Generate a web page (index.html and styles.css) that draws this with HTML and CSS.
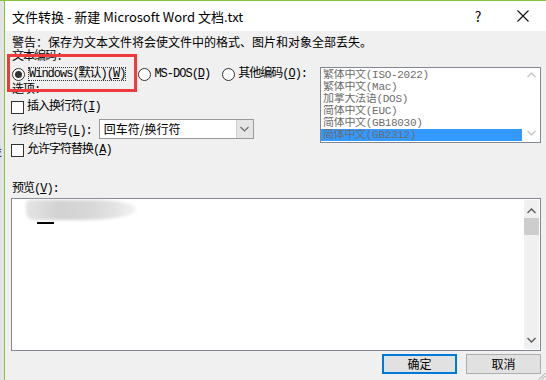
FILE: index.html
```html
<!DOCTYPE html>
<html lang="zh-CN">
<head>
  <meta charset="UTF-8">
  <title>文件转换</title>
  <link rel="stylesheet" href="styles.css">
</head>
<body>
  <div class="screen">
    <div class="desk"><span>设</span></div>

    <div class="window">
      <!-- Title bar -->
      <div class="titlebar">
        <span class="title">文件转换 - 新建 Microsoft Word 文档.txt</span>
        <span class="tb-btn help">?</span>
        <span class="tb-btn close">
          <svg width="12" height="12" viewBox="0 0 12 12"><path d="M0.5 0.5 L11.5 11.5 M11.5 0.5 L0.5 11.5" stroke="#111" stroke-width="1.1" fill="none"/></svg>
        </span>
      </div>

      <div class="content">
        <p class="warning">警告：保存为文本文件将会使文件中的格式、图片和对象全部丢失。</p>

        <div class="options">
          <div class="left">
            <div class="label mono">文本编码:</div>
            <div class="radios mono">
              <span class="radio checked"><span class="circle"></span><span class="focus">Windows(默认)(<u>W</u>)</span></span>
              <span class="radio"><span class="circle"></span><span>MS-DOS(<u>D</u>)</span></span>
              <span class="radio"><span class="circle"></span><span>其他编码(<u>O</u>):</span></span>
            </div>
            <div class="label opts mono">选项:</div>
            <div class="check mono first"><span class="box"></span>插入换行符(<u>I</u>)</div>
            <div class="eol">
              <span class="mono">行终止符号(<u>L</u>):</span>
              <div class="select">
                <span class="select-value">回车符/换行符</span>
                <span class="select-arrow">
                  <svg width="9" height="6" viewBox="0 0 9 6"><path d="M0.5 1 L4.5 5 L8.5 1" stroke="#6a6a6a" stroke-width="1.2" fill="none"/></svg>
                </span>
              </div>
            </div>
            <div class="check mono second"><span class="box"></span>允许字符替换(<u>A</u>)</div>
          </div>

          <div class="listbox mono">
            <div class="items">
              <div class="item">繁体中文(ISO-2022)</div>
              <div class="item">繁体中文(Mac)</div>
              <div class="item">加拿大法语(DOS)</div>
              <div class="item">简体中文(EUC)</div>
              <div class="item">简体中文(GB18030)</div>
              <div class="item selected">简体中文(GB2312)</div>
            </div>
            <div class="list-scroll">
              <svg width="9" height="6" viewBox="0 0 9 6"><path d="M0.5 5 L4.5 1 L8.5 5" stroke="#c8c8c8" stroke-width="1.4" fill="none"/></svg>
              <svg width="9" height="6" viewBox="0 0 9 6"><path d="M0.5 1 L4.5 5 L8.5 1" stroke="#c8c8c8" stroke-width="1.4" fill="none"/></svg>
            </div>
          </div>
        </div>

        <div class="label preview-label mono">预览(<u>V</u>):</div>
        <div class="preview">
          <div class="preview-text">
            <div class="smudge"></div>
            <div class="cursor-line"></div>
          </div>
          <div class="vscroll">
            <svg width="9" height="6" viewBox="0 0 9 6"><path d="M0.5 5 L4.5 1 L8.5 5" stroke="#606060" stroke-width="1.5" fill="none"/></svg>
            <div class="thumb"></div>
            <div class="spacer"></div>
            <svg width="9" height="6" viewBox="0 0 9 6"><path d="M0.5 1 L4.5 5 L8.5 1" stroke="#606060" stroke-width="1.5" fill="none"/></svg>
          </div>
        </div>

        <div class="buttons mono">
          <button class="btn default">确定</button>
          <button class="btn">取消</button>
        </div>
      </div>
    </div>

    <!-- red annotation box -->
    <div class="annot"></div>

    <svg class="grip" width="9" height="9" viewBox="0 0 9 9">
      <path d="M8.5 2 L2 8.5 M8.5 5 L5 8.5" stroke="#a0a0a0" stroke-width="1" fill="none"/>
    </svg>
  </div>
</body>
</html>
```

FILE: styles.css
```css
body {
  margin: 0;
  background: #f0f0f0;
  font-family: "Noto Sans CJK SC", sans-serif;
  font-size: 12px;
  color: #000;
}

.screen {
  position: relative;
  display: flex;
  width: 546px;
  height: 380px;
  border-top: 1px solid #86c440;
  box-sizing: border-box;
  overflow: hidden;
}

.desk {
  width: 4px;
  background: #e3e3e3;
  overflow: hidden;
}

.desk span {
  display: block;
  width: 14px;
  margin-left: -10px;
  margin-top: 143px;
  line-height: 14px;
  font-size: 12px;
  color: #222;
}

.window {
  flex: 1;
  display: flex;
  flex-direction: column;
  border-left: 1px solid #86c440;
  background: #f0f0f0;
}

.titlebar {
  height: 30px;
  display: flex;
  align-items: center;
  padding-left: 7px;
  background: #fff;
}

.title {
  flex: 1;
  font-size: 13px;
  white-space: nowrap;
}

.tb-btn {
  display: flex;
  justify-content: center;
  align-items: center;
  height: 30px;
}

.help {
  width: 44px;
  font-size: 14px;
}

.close {
  width: 46px;
}

.content {
  display: flex;
  flex-direction: column;
  padding: 0 5px 0 6px;
}

.mono {
  font-family: "Liberation Mono", "Noto Sans CJK SC", monospace;
  font-size: 12px;
  letter-spacing: -1px;
}

.warning {
  margin: 3px 0 0 1px;
  height: 16px;
  line-height: 16px;
  white-space: nowrap;
}

.options {
  display: flex;
}

.left {
  width: 309px;
}

.label {
  margin-left: 1px;
  height: 14px;
  line-height: 14px;
}

.radios {
  display: flex;
  gap: 12px;
  margin-top: 2px;
  height: 16px;
  line-height: 16px;
  margin-left: 1px;
}

.radio {
  display: flex;
  align-items: center;
  gap: 2px;
}

.circle {
  width: 11px;
  height: 11px;
  border: 1px solid #333;
  border-radius: 50%;
  background: #fff;
  display: flex;
  justify-content: center;
  align-items: center;
  margin-right: 1px;
}

.radio.checked .circle::after {
  content: "";
  width: 7px;
  height: 7px;
  border-radius: 50%;
  background: #333;
}

.focus {
  outline: 1px dotted #333;
  outline-offset: -1px;
  padding: 0 1px;
  height: 14px;
  line-height: 14px;
}

.label.opts {
  height: 16px;
  line-height: 16px;
}

.check {
  display: flex;
  align-items: center;
  height: 16px;
  line-height: 16px;
}

.check.first {
  margin-top: 1px;
}

.check.second {
  margin-top: 3px;
}

.box {
  width: 11px;
  height: 11px;
  border: 1px solid #333;
  background: #fff;
  margin-right: 3px;
}

.eol {
  display: flex;
  align-items: center;
  gap: 7px;
  margin-top: 4px;
  margin-left: 1px;
  height: 20px;
}

.select {
  width: 155px;
  height: 20px;
  box-sizing: border-box;
  border: 1px solid #9a9a9a;
  background: #fff;
  display: flex;
  align-items: center;
}

.select-value {
  flex: 1;
  padding-left: 4px;
  line-height: 18px;
}

.select-arrow {
  width: 16px;
  height: 18px;
  background: #e5e5e5;
  border-left: 1px solid #d0d0d0;
  display: flex;
  justify-content: center;
  align-items: center;
}

.listbox {
  width: 221px;
  height: 76px;
  margin-top: 17px;
  box-sizing: border-box;
  border: 1px solid #828790;
  background: #fff;
  display: flex;
  color: #6d6d6d;
}

.items {
  flex: 1;
  padding-top: 1px;
}

.item {
  height: 12px;
  line-height: 12px;
  padding-left: 2px;
  font-size: 11px;
  letter-spacing: -0.3px;
  white-space: nowrap;
  overflow: hidden;
}

.item.selected {
  background: #3399ff;
}

.list-scroll {
  width: 18px;
  display: flex;
  flex-direction: column;
  justify-content: space-between;
  align-items: center;
  padding: 4px 0 6px;
}

.preview-label {
  margin-top: 23px;
  height: 16px;
  line-height: 16px;
}

.preview {
  margin-top: 1px;
  height: 153px;
  box-sizing: border-box;
  border: 1px solid #828790;
  background: #fff;
  display: flex;
}

.preview-text {
  flex: 1;
}

.smudge {
  width: 110px;
  height: 20px;
  margin: 1px 0 0 14px;
  border-radius: 4px 40% 50% 8px;
  background: linear-gradient(90deg, #e4e4e4 0%, #d2d2d2 30%, #d8d8d8 60%, #e2e2e2 80%, #f4f4f4 100%);
  filter: blur(1.5px);
}

.cursor-line {
  width: 17px;
  height: 2px;
  margin: 2px 0 0 25px;
  background: #000;
}

.vscroll {
  width: 15px;
  margin: 1px 1px 1px 0;
  background: #f0f0f0;
  display: flex;
  flex-direction: column;
  align-items: center;
  padding: 8px 0 6px;
}

.thumb {
  width: 15px;
  height: 17px;
  margin-top: 4px;
  background: #cdcdcd;
}

.spacer {
  flex: 1;
}

.buttons {
  display: flex;
  justify-content: flex-end;
  gap: 9px;
  margin-top: 3px;
}

.btn {
  width: 75px;
  height: 20px;
  padding: 0;
  box-sizing: border-box;
  border: 1px solid #adadad;
  background: #e1e1e1;
  font-family: "Noto Sans CJK SC", sans-serif;
  font-size: 12px;
  line-height: 16px;
  color: #000;
}

.btn.default {
  border: 2px solid #0078d7;
}

.annot {
  position: absolute;
  left: 7px;
  top: 53px;
  width: 130px;
  height: 38px;
  box-sizing: border-box;
  border: 3px solid #ef3b3b;
}

.grip {
  position: absolute;
  right: 0;
  bottom: 0;
}
```
